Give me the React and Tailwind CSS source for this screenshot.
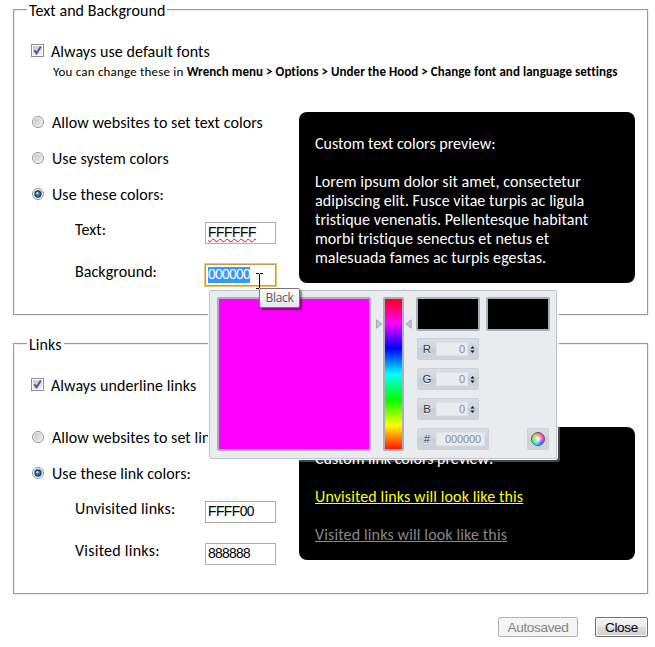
function Check() {
  return (
    <span className="mt-[1px] flex h-[13px] w-[13px] shrink-0 items-center justify-center border border-[#8e8f8f] bg-white">
      <span className="flex h-[9px] w-[9px] items-center justify-center bg-linear-to-br from-[#c3c8d0] to-[#f0f1f3]">
        <svg width="9" height="9" viewBox="0 0 9 9" fill="none" stroke="#41549c" strokeWidth="1.9">
          <path d="M1.4 4.2 L3.6 7.2 L7.8 0.6" />
        </svg>
      </span>
    </span>
  );
}

function Radio({ on }) {
  return (
    <span className="flex h-3 w-3 shrink-0 items-center justify-center rounded-full border border-[#929494] bg-[#f6f6f6]">
      {on ? (
        <svg width="8" height="8" viewBox="0 0 8 8">
          <circle cx="4" cy="4" r="3.7" fill="#1b3a56" />
          <circle cx="4" cy="4" r="2.6" fill="#1f6fa5" />
          <circle cx="3.4" cy="3.2" r="1.2" fill="#9fdcf5" />
        </svg>
      ) : (
        <span className="h-2 w-2 rounded-full bg-linear-to-br from-[#c3c6ca] to-[#efefef]" />
      )}
    </span>
  );
}

function RadioRow({ on, children }) {
  return (
    <div className="flex h-[19px] items-start gap-2">
      <span className="mt-[2px]"><Radio on={on} /></span>
      <span className="-mt-px">{children}</span>
    </div>
  );
}

function Field({ label, children }) {
  return (
    <div className="flex h-[22px] items-start">
      <span className="-mt-0.5 w-[130px]">{label}</span>
      {children}
    </div>
  );
}

const inputText = "font-['Liberation_Sans',Arial,sans-serif] text-[13.8px] leading-[16px]";

function Input({ children, tracking }) {
  return (
    <span className={`flex h-[22px] w-[71px] items-center border border-[#abadb3] bg-white pl-[2px] ${inputText} ${tracking}`}>
      {children}
    </span>
  );
}

function Channel({ name, value, wide }) {
  return (
    <div className={`${wide ? "w-[72px]" : "w-[62px]"} flex h-[22px] items-center rounded-[2px] border border-[#ccd0d8] bg-[linear-gradient(#d9dce2_0%,#d3d6dd_42%,#c9cdd5_46%,#cfd3da_100%)] font-['Liberation_Sans',Arial,sans-serif] text-[11px] tracking-normal text-[#2c3344]`}>
      <span className="w-[18px] text-center text-[11.5px] [text-shadow:0_1px_0_#fff]">{name}</span>
      <span className={`${wide ? "w-[49px] pr-[3px] tracking-[-0.1px]" : "w-8 pr-[2px]"} flex h-[14px] items-center justify-end border border-[#dfe2e8] bg-[#e9ebef] text-[#7f89a0]`}>{value}</span>
      {!wide && (
        <svg className="ml-[2px]" width="5" height="7" viewBox="0 0 5 7" fill="#111">
          <path d="M2.5 0 L4.5 2.4 H0.5 Z M0.5 4.6 H4.5 L2.5 7 Z" />
        </svg>
      )}
    </div>
  );
}

const group = "min-w-0 border border-[#9a9a9a] bg-white shadow-[1px_1px_0_#eee,inset_1px_1px_0_#eee]";

function Picker() {
  return (
    <div className="absolute left-[209px] top-[290px] flex h-[169px] w-[348px] rounded-[2px] border border-[#bdc2ce] bg-[#e9ebef] pl-[7px] pt-[6px] shadow-[0_0_0_1px_#fff,3px_3px_0_rgba(255,255,255,0.27)]">
      <div className="h-[154px] w-[154px] rounded-[2px] border-2 border-[#a9b0bd] bg-[#ff00ff]" />
      <svg className="ml-[5px] mt-[22px]" width="7" height="10" viewBox="0 0 7 10">
        <path d="M0.5 0.8 L5.8 5 L0.5 9.2 Z" fill="#bfc5d0" stroke="#a4abb9" />
      </svg>
      <div className="h-[154px] w-[21px] rounded-[2px] border-2 border-[#a9b0bd] bg-[linear-gradient(#f00_0%,#f0f_16.67%,#00f_33.33%,#0ff_50%,#0f0_66.67%,#ff0_83.33%,#f00_100%)] bg-origin-border" />
      <svg className="ml-px mt-[22px]" width="7" height="10" viewBox="0 0 7 10">
        <path d="M6.2 0.8 L1 5 L6.2 9.2 Z" fill="#bfc5d0" stroke="#a4abb9" />
      </svg>
      <div className="ml-[4px] flex flex-col">
        <div className="flex gap-[6px]">
          <div className="h-[34px] w-16 rounded-[2px] border-2 border-[#a9b0bd] bg-black" />
          <div className="h-[34px] w-16 rounded-[2px] border-2 border-[#a9b0bd] bg-black" />
        </div>
        <div className="ml-px mt-[7px] flex flex-col gap-2">
          <Channel name="R" value="0" />
          <Channel name="G" value="0" />
          <Channel name="B" value="0" />
          <div className="flex w-[132px] justify-between">
            <Channel name="#" value="000000" wide />
            <div className="flex h-[22px] w-[22px] items-center justify-center rounded-[2px] border border-[#ccd0d8] bg-[linear-gradient(#d9dce2_0%,#d3d6dd_42%,#c9cdd5_46%,#cfd3da_100%)]">
              <span className="h-[14px] w-[14px] rounded-full border border-[#555b66] bg-[radial-gradient(circle,#fff_5%,transparent_60%),conic-gradient(#f76_0deg,#f4a_50deg,#e3f_90deg,#45f_140deg,#3df_190deg,#3f9_230deg,#6e4_280deg,#cc4_320deg,#f76_360deg)]" />
            </div>
          </div>
        </div>
      </div>
    </div>
  );
}

export default function App() {
  return (
    <div className="relative h-[647px] w-[655px] overflow-hidden bg-white pl-[13px] pr-[7px] font-['Calibri','Carlito','Lato',sans-serif] text-[16px] leading-[19px] tracking-[0.07px] text-black">
      <fieldset className={`h-[315px] ${group}`}>
        <legend className="ml-[13px] h-[19px] bg-white pl-[2px] pr-[2px] pt-px">Text and Background</legend>
        <div className="flex h-[41px] items-start gap-[7px] pl-[17px] pt-[24px]">
          <Check />
          <span className="-mt-px">Always use default fonts</span>
        </div>
        <div className="mt-[2px] whitespace-nowrap pl-[39px] text-[13px] tracking-[0.19px]">
          You can change these in <b className="tracking-[0.05px]">Wrench menu &gt; Options &gt; Under the Hood &gt; Change font and language settings</b>
        </div>
        <div className="flex pl-[18px] pt-[31px]">
          <div className="flex w-[267px] flex-col">
            <div className="mt-[2px] flex flex-col gap-[17px]">
              <RadioRow>Allow websites to set text colors</RadioRow>
              <RadioRow>Use system colors</RadioRow>
              <RadioRow on>Use these colors:</RadioRow>
            </div>
            <div className="mt-[17px] flex flex-col gap-5 pl-[43px]">
              <Field label="Text:">
                <Input tracking="tracking-[-0.42px]">
                  <span className="underline decoration-[#f00] decoration-wavy decoration-1 underline-offset-[1px]">FFFFFF</span>
                </Input>
              </Field>
              <Field label="Background:">
                <span className={`flex h-[22px] w-[71px] items-center border border-[#c29a4c] bg-white pl-[2px] shadow-[0_0_0_1px_#f0c463] ${inputText} tracking-[-0.67px]`}>
                  <span className="bg-[#3399ff] text-white">000000</span>
                </span>
              </Field>
            </div>
          </div>
          <div className="h-[171px] w-[336px] rounded-[8px] bg-black px-4 pt-[22px] text-white">
            <p className="tracking-normal [font-variant-ligatures:none]">Custom text colors preview:</p>
            <p className="mt-[19px]">Lorem ipsum dolor sit amet, consectetur<br />adipiscing elit. Fusce vitae turpis ac ligula<br />tristique venenatis. Pellentesque habitant<br />morbi tristique senectus et netus et<br />malesuada fames ac turpis egestas.</p>
          </div>
        </div>
      </fieldset>

      <fieldset className={`mt-[19px] h-[260px] ${group}`}>
        <legend className="ml-[13px] h-[19px] bg-white pl-[2px] pr-[2px] pt-px">Links</legend>
        <div className="flex h-[43px] items-start gap-[7px] pl-[17px] pt-[24px]">
          <Check />
          <span className="-mt-px">Always underline links</span>
        </div>
        <div className="flex pl-[18px] pt-[31px]">
          <div className="flex w-[267px] flex-col">
            <div className="mt-[2px] flex flex-col gap-[17px]">
              <RadioRow>Allow websites to set link colors</RadioRow>
              <RadioRow on>Use these link colors:</RadioRow>
            </div>
            <div className="mt-[17px] flex flex-col gap-5 pl-[43px]">
              <Field label={<span className="tracking-[0.16px]">Unvisited links:</span>}><Input tracking="tracking-[-0.52px]">FFFF00</Input></Field>
              <Field label={<span className="tracking-[0.25px]">Visited links:</span>}><Input tracking="tracking-[-0.67px]">888888</Input></Field>
            </div>
          </div>
          <div className="h-[133px] w-[336px] rounded-[8px] bg-black px-4 pt-[22px] text-white">
            <p className="tracking-normal [font-variant-ligatures:none]">Custom link colors preview:</p>
            <p className="mt-[19px] tracking-[0.12px] text-[#ff0] underline">Unvisited links will look like this</p>
            <p className="mt-[19px] tracking-[0.14px] text-[#888] underline">Visited links will look like this</p>
          </div>
        </div>
      </fieldset>

      <div className="mt-[23px] flex justify-end gap-[17px] font-['Liberation_Sans',Arial,sans-serif] text-[13.6px] leading-[18px] tracking-[-0.35px]">
        <button className="flex h-5 w-20 items-center justify-center rounded-[2px] border border-[#adb2b5] bg-[#f4f4f4] pt-px text-[#838383]">Autosaved</button>
        <button className="flex h-5 w-[53px] items-center justify-center rounded-[2px] border border-[#707070] bg-[linear-gradient(#f2f2f2_0%,#ebebeb_50%,#dddddd_50%,#cfcfcf_100%)] pt-px shadow-[inset_0_0_0_1px_#fafafa]">Close</button>
      </div>

      <Picker />

      <svg className="absolute left-[255px] top-[273px]" width="9" height="16" viewBox="0 0 9 16" stroke="#000" fill="none" shapeRendering="crispEdges">
        <path d="M1 0.5 H4 M5 0.5 H8 M4.5 1 V15 M1 15.5 H4 M5 15.5 H8" />
      </svg>
      <div className="absolute left-[259px] top-[288px] flex h-5 w-[41px] items-center justify-center rounded-[2px] border border-[#767676] bg-linear-to-b from-white to-[#e4e5f0] font-['Open_Sans',sans-serif] text-[12px] tracking-[-0.3px] text-[#575757] shadow-[2px_2px_2px_rgba(0,0,0,0.45)]"><span className="-mt-px">Black</span></div>
    </div>
  );
}
